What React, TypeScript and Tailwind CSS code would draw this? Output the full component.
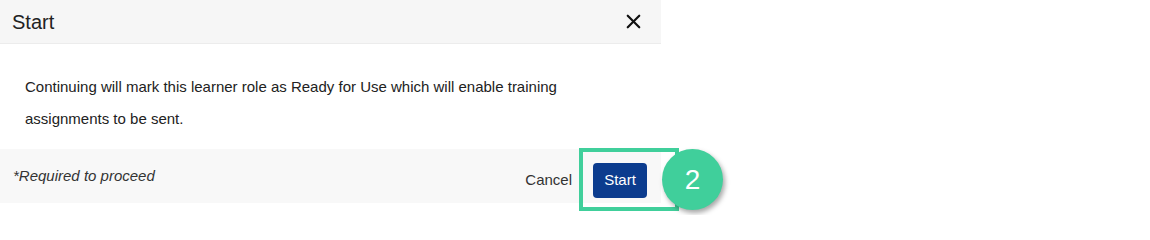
import { X } from "lucide-react";

const App = () => {
  return (
    <div className="relative w-[1150px] h-[215px] bg-white font-['Liberation_Sans',Arial,sans-serif] text-[#222]">
      <div className="w-[661px]">
        {/* Header */}
        <div className="flex items-center justify-between h-[44px] pl-[12px] pr-[16px] bg-[#f6f6f6] border-b border-[#ececec]">
          <h2 className="text-[20px] text-[#222]">Start</h2>
          <X size={23} strokeWidth={2.3} className="text-[#111]" />
        </div>

        {/* Body */}
        <div className="pl-[25px] pr-[20px] pt-[27px] pb-[14px] text-[15px] leading-[32px] text-[#222]">
          Continuing will mark this learner role as Ready for Use which will enable training
          <br />
          assignments to be sent.
        </div>

        {/* Footer */}
        <div className="flex items-center h-[54px] pl-[13px] bg-[#f8f8f8]">
          <span className="italic text-[15px] text-[#333]">*Required to proceed</span>
          <div className="ml-auto flex items-center gap-[21px] pt-[9px] pr-[14px]">
            <button className="text-[15px] text-[#333]">Cancel</button>
            <button className="w-[54px] h-[35px] rounded-[4px] bg-[#0c3c8e] text-white text-[15px]">
              Start
            </button>
          </div>
        </div>
      </div>

      {/* Annotation */}
      <div className="absolute left-[579px] top-[148px] w-[100px] h-[63px] border-[4px] border-[#40cf9b]" />
      <div className="absolute left-[662px] top-[149px] w-[61px] h-[61px] rounded-full bg-[#40cf9b] shadow-[2px_3px_5px_rgba(0,0,0,0.35)] flex items-center justify-center">
        <span className="text-white text-[28px] font-['Liberation_Sans',Arial,sans-serif]">2</span>
      </div>
    </div>
  );
};

export default App;
